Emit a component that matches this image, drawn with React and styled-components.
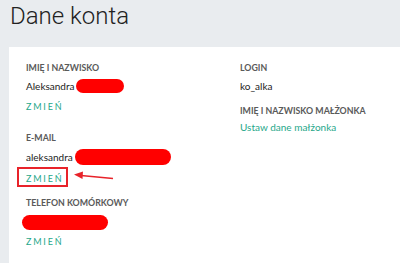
import React from "react";
import styled, { createGlobalStyle } from "styled-components";

const Global = createGlobalStyle`
  html, body { margin: 0; padding: 0; background: #e9ecef; }
  body { font-family: Lato, "Open Sans", sans-serif; }
  * { box-sizing: border-box; }
`;

const Page = styled.div`
  width: 400px;
  height: 263px;
  overflow: hidden;
  background: #e9ecef;
  padding: 0 0 0 9px;
  display: flex;
  flex-direction: column;
`;

const Title = styled.h1`
  margin: 0;
  padding: 2px 0 0 1px;
  height: 47px;
  font-family: Roboto, sans-serif;
  font-weight: 300;
  font-size: 24px;
  line-height: 28px;
  color: #222;
`;

const Card = styled.section`
  flex: 1;
  background: #fff;
  padding: 16px 0 0 17px;
  display: grid;
  grid-template-columns: 214px 1fr;
`;

const Column = styled.div`
  display: flex;
  flex-direction: column;
`;

const Field = styled.div`
  display: flex;
  flex-direction: column;
  margin-bottom: ${(p) => p.$gap || 0}px;
`;

const Label = styled.div`
  font-size: 8.8px;
  font-weight: 700;
  line-height: 10px;
  color: #5a5a5a;
  text-transform: uppercase;
`;

const Value = styled.div`
  margin-top: ${(p) => p.$top ?? 6}px;
  font-size: 10px;
  line-height: 14px;
  color: #222;
  display: flex;
  align-items: center;
`;

const Redacted = styled.span`
  display: inline-block;
  width: ${(p) => p.$w}px;
  height: ${(p) => p.$h || 14}px;
  background: #ff0000;
  border-radius: 8px;
  margin-left: ${(p) => p.$ml || 0}px;
`;

const Action = styled.a`
  position: relative;
  align-self: flex-start;
  margin-top: ${(p) => p.$top ?? 8}px;
  font-size: 9px;
  line-height: 12px;
  letter-spacing: 1.8px;
  color: #1fa78a;
  text-transform: uppercase;
  cursor: pointer;
`;

const Highlight = styled.span`
  position: absolute;
  left: -9px;
  top: -6px;
  width: 51px;
  height: 20px;
  border: 2px solid #e8232a;
  pointer-events: none;
`;

const Arrow = styled.svg`
  position: absolute;
  left: 48px;
  top: -2px;
  overflow: visible;
`;

const Link = styled.a`
  margin-top: 4px;
  font-size: 10px;
  line-height: 14px;
  color: #1fa78a;
  cursor: pointer;
`;

export default function App() {
  return (
    <>
      <Global />
      <Page>
        <Title>Dane konta</Title>
        <Card>
          <Column>
            <Field $gap={20}>
              <Label>Imię i nazwisko</Label>
              <Value>
                Aleksandra<Redacted $w={48} $ml={2} />
              </Value>
              <Action>Zmień</Action>
            </Field>
            <Field $gap={13}>
              <Label>E-mail</Label>
              <Value>
                aleksandra<Redacted $w={96} $h={16} $ml={2} />
              </Value>
              <Action>
                Zmień
                <Highlight />
                <Arrow width="40" height="12" viewBox="0 0 40 12">
                  <line x1="7" y1="4.5" x2="39" y2="7.5" stroke="#e8232a" strokeWidth="1.6" />
                  <polygon points="0,3.5 9,0.5 8.5,8" fill="#e8232a" />
                </Arrow>
              </Action>
            </Field>
            <Field>
              <Label>Telefon komórkowy</Label>
              <Value $top={7}>
                <Redacted $w={86} $h={15} $ml={-4} />
              </Value>
              <Action $top={6}>Zmień</Action>
            </Field>
          </Column>
          <Column>
            <Field $gap={13}>
              <Label>Login</Label>
              <Value>ko_alka</Value>
            </Field>
            <Field>
              <Label>Imię i nazwisko małżonka</Label>
              <Link>Ustaw dane małżonka</Link>
            </Field>
          </Column>
        </Card>
      </Page>
    </>
  );
}
